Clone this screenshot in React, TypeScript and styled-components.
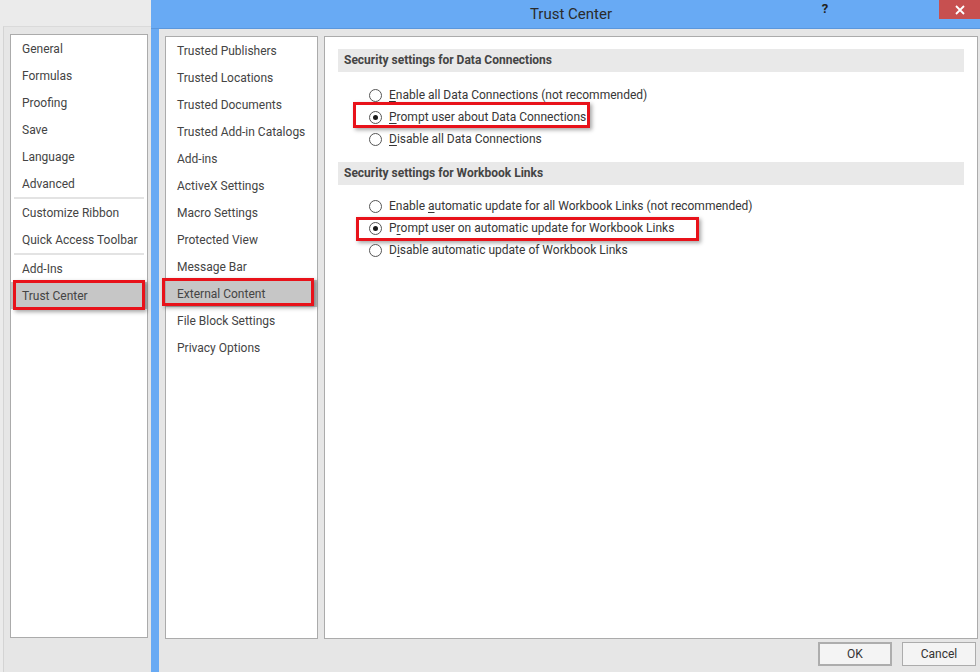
import React from "react";
import styled, { createGlobalStyle } from "styled-components";

const GlobalStyle = createGlobalStyle`
    html, body {
        margin: 0;
        padding: 0;
        background: #e6e6e6;
    }
    body {
        font-family: Roboto, "Noto Sans", sans-serif;
        -webkit-font-smoothing: antialiased;
    }
`;

const Screen = styled.div`
    width: 980px;
    height: 672px;
    display: flex;
    overflow: hidden;
    font-size: 12px;
    color: #444;
`;

// The Excel Options window peeking out behind the dialog.
const OptionsWindow = styled.div`
    width: 151px;
    flex-shrink: 0;
    display: flex;
    flex-direction: column;
    background: #ebebeb;
`;

const OptionsTop = styled.div`
    height: 26px;
`;

const OptionsBody = styled.div`
    flex: 1;
    display: flex;
    margin-left: 3px;
    padding: 7px 3px 34px 6px;
    background: #e6e6e6;
    border-left: 1px solid #d4d4d4;
    border-top: 1px solid #dadada;
`;

const ListBox = styled.ul<{ $width?: number }>`
    list-style: none;
    margin: 0;
    padding: 0;
    flex: ${(p) => (p.$width ? "none" : "1")};
    width: ${(p) => (p.$width ? `${p.$width}px` : "auto")};
    background: #fff;
    border: 1px solid #ababab;
`;

const ListItem = styled.li<{ $selected?: boolean }>`
    position: relative;
    box-sizing: border-box;
    height: 27px;
    padding: 2px 0 0 11px;
    line-height: 25px;
    white-space: nowrap;
    color: #444;
    background: ${(p) => (p.$selected ? "#c6c6c6" : "transparent")};
`;

const Separator = styled.li`
    height: 2px;
    margin: 0 3px;
    background: #e3e3e3;
`;

// Red annotation frame drawn over an item.
const Callout = styled.span<{ $inset: string }>`
    position: absolute;
    inset: ${(p) => p.$inset};
    border: 3px solid #e8121a;
    box-shadow: 2px 2px 4px rgba(0, 0, 0, 0.35);
    pointer-events: none;
`;

const Dialog = styled.div`
    flex: 1;
    display: flex;
    flex-direction: column;
    background: #68aaf4;
`;

const TitleBar = styled.div`
    height: 28px;
    display: grid;
    grid-template-columns: 1fr auto 1fr;
    padding-left: 11px;
    border-bottom: 1px solid #5b97dc;
`;

const Title = styled.div`
    grid-column: 2;
    font-size: 15px;
    line-height: 28px;
    color: #2b2b2b;
`;

const WindowControls = styled.div`
    grid-column: 3;
    justify-self: end;
    display: flex;
    align-items: flex-start;
`;

const HelpButton = styled.span`
    width: 18px;
    margin-right: 105px;
    font-size: 13px;
    font-weight: 700;
    line-height: 18px;
    text-align: center;
    color: #222;
`;

const CloseButton = styled.span`
    width: 41px;
    height: 19px;
    display: flex;
    align-items: center;
    justify-content: center;
    background: #c75050;
`;

const DialogBody = styled.div`
    flex: 1;
    display: flex;
    flex-direction: column;
    margin-left: 8px;
    background: #e6e6e6;
`;

const Panes = styled.div`
    flex: 1;
    display: flex;
    gap: 6px;
    padding: 7px 2px 0 6px;
`;

const ContentPane = styled.div`
    flex: 1;
    background: #fff;
    border: 1px solid #ababab;
    padding: 12px 13px;
`;

const SectionHeader = styled.div<{ $first?: boolean }>`
    height: 23px;
    line-height: 23px;
    padding-left: 6px;
    margin-top: ${(p) => (p.$first ? "0" : "12px")};
    background: #e9e9e9;
    font-weight: 700;
    color: #444;
`;

const RadioGroup = styled.div<{ $top: number }>`
    padding-top: ${(p) => p.$top}px;
    padding-left: 31px;
`;

const RadioRow = styled.label`
    position: relative;
    display: flex;
    align-items: center;
    width: fit-content;
    height: 22px;
    gap: 7px;
    color: #363636;
`;

const RadioDot = styled.span<{ $checked?: boolean }>`
    width: 11px;
    height: 11px;
    border-radius: 50%;
    border: 1px solid #555;
    background: #fff;
    display: flex;
    align-items: center;
    justify-content: center;

    &::after {
        content: "";
        width: 5px;
        height: 5px;
        border-radius: 50%;
        background: #1a1a1a;
        display: ${(p) => (p.$checked ? "block" : "none")};
    }
`;

const AccessKey = styled.u`
    text-decoration-thickness: 1px;
    text-underline-offset: 2px;
`;

const Footer = styled.div`
    height: 33px;
    display: flex;
    justify-content: flex-end;
    align-items: flex-start;
    gap: 10px;
    padding: 3px 4px 0 0;
    box-sizing: border-box;
`;

const Button = styled.button<{ $default?: boolean }>`
    width: 74px;
    height: 24px;
    box-sizing: border-box;
    border: ${(p) => (p.$default ? "2px solid #adadad" : "1px solid #acacac")};
    background: #f4f4f4;
    font-family: inherit;
    font-size: 12px;
    color: #333;
    padding: 0;
`;

const optionsItems = [
    "General",
    "Formulas",
    "Proofing",
    "Save",
    "Language",
    "Advanced",
    "-",
    "Customize Ribbon",
    "Quick Access Toolbar",
    "-",
    "Add-Ins",
    "Trust Center",
];

const trustItems = [
    "Trusted Publishers",
    "Trusted Locations",
    "Trusted Documents",
    "Trusted Add-in Catalogs",
    "Add-ins",
    "ActiveX Settings",
    "Macro Settings",
    "Protected View",
    "Message Bar",
    "External Content",
    "File Block Settings",
    "Privacy Options",
];

interface RadioOption {
    before: string;
    key: string;
    after: string;
    checked?: boolean;
    callout?: string;
}

const dataConnections: RadioOption[] = [
    { before: "", key: "E", after: "nable all Data Connections (not recommended)" },
    {
        before: "",
        key: "P",
        after: "rompt user about Data Connections",
        checked: true,
        callout: "-4px -4px 0 -16px",
    },
    { before: "", key: "D", after: "isable all Data Connections" },
];

const workbookLinks: RadioOption[] = [
    { before: "Enable ", key: "a", after: "utomatic update for all Workbook Links (not recommended)" },
    {
        before: "P",
        key: "r",
        after: "ompt user on automatic update for Workbook Links",
        checked: true,
        callout: "0 -25px -2px -13px",
    },
    { before: "D", key: "i", after: "sable automatic update of Workbook Links" },
];

function Radios({ options, top }: { options: RadioOption[]; top: number }) {
    return (
        <RadioGroup $top={top}>
            {options.map((o) => (
                <RadioRow key={o.after}>
                    <RadioDot $checked={o.checked} />
                    <span>
                        {o.before}
                        <AccessKey>{o.key}</AccessKey>
                        {o.after}
                    </span>
                    {o.callout && <Callout $inset={o.callout} />}
                </RadioRow>
            ))}
        </RadioGroup>
    );
}

export default function App() {
    return (
        <Screen>
            <GlobalStyle />
            <OptionsWindow>
                <OptionsTop />
                <OptionsBody>
                    <ListBox>
                        {optionsItems.map((item, i) =>
                            item === "-" ? (
                                <Separator key={i} />
                            ) : (
                                <ListItem key={item} $selected={item === "Trust Center"}>
                                    {item}
                                    {item === "Trust Center" && <Callout $inset="-2px 2px -1px 2px" />}
                                </ListItem>
                            )
                        )}
                    </ListBox>
                </OptionsBody>
            </OptionsWindow>
            <Dialog>
                <TitleBar>
                    <Title>Trust Center</Title>
                    <WindowControls>
                        <HelpButton>?</HelpButton>
                        <CloseButton>
                            <svg width="10" height="10" viewBox="0 0 10 10">
                                <path d="M1 1 L9 9 M9 1 L1 9" stroke="#fff" strokeWidth="1.8" />
                            </svg>
                        </CloseButton>
                    </WindowControls>
                </TitleBar>
                <DialogBody>
                    <Panes>
                        <ListBox $width={151}>
                            {trustItems.map((item) => (
                                <ListItem key={item} $selected={item === "External Content"}>
                                    {item}
                                    {item === "External Content" && <Callout $inset="-2px 3px 1px -4px" />}
                                </ListItem>
                            ))}
                        </ListBox>
                        <ContentPane>
                            <SectionHeader $first>Security settings for Data Connections</SectionHeader>
                            <Radios options={dataConnections} top={12} />
                            <SectionHeader>Security settings for Workbook Links</SectionHeader>
                            <Radios options={workbookLinks} top={10} />
                        </ContentPane>
                    </Panes>
                    <Footer>
                        <Button $default>OK</Button>
                        <Button>Cancel</Button>
                    </Footer>
                </DialogBody>
            </Dialog>
        </Screen>
    );
}
